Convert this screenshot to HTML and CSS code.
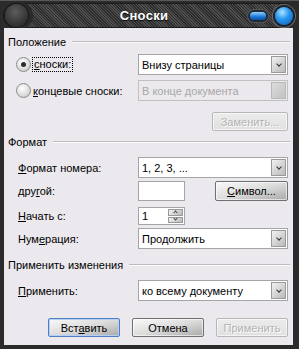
FILE: index.html
```html
<!DOCTYPE html>
<html>
<head>
    <title>Сноски</title>
    <link rel="stylesheet" href="styles.css">
</head>
<body>
    <div class="window">
        <div class="titlebar">
            <div class="track">
                <span class="orb"></span>
                <span class="title">Сноски</span>
                <span class="pill"></span>
                <span class="orb-blue"></span>
            </div>
        </div>

        <div class="client">
            <div class="group-title g1"><span>Положение</span></div>

            <div class="row r1">
                <div class="label radio-label">
                    <span class="radio checked"></span>
                    <span class="focus"><u>с</u>носки:</span>
                </div>
                <div class="select"><span class="value">Внизу страницы</span><span class="drop"></span></div>
            </div>

            <div class="row r2">
                <div class="label radio-label">
                    <span class="radio"></span>
                    <span><u>к</u>онцевые сноски:</span>
                </div>
                <div class="select disabled"><span class="value">В конце документа</span><span class="drop"></span></div>
            </div>

            <div class="row r3">
                <button class="btn disabled replace">Заменить...</button>
            </div>

            <div class="group-title g2"><span>Формат</span></div>

            <div class="row r4">
                <div class="label"><u>Ф</u>ормат номера:</div>
                <div class="select"><span class="value">1, 2, 3, ...</span><span class="drop"></span></div>
            </div>

            <div class="row r5">
                <div class="label">дру<u>г</u>ой:</div>
                <div class="input short"></div>
                <button class="btn symbol"><u>С</u>имвол...</button>
            </div>

            <div class="row r6">
                <div class="label"><u>Н</u>ачать с:</div>
                <div class="input short spin">
                    <span class="value">1</span>
                    <span class="spin-buttons">
                        <span class="spin-up"></span>
                        <span class="spin-down"></span>
                    </span>
                </div>
            </div>

            <div class="row r7">
                <div class="label">Нум<u>е</u>рация:</div>
                <div class="select"><span class="value">Продолжить</span><span class="drop"></span></div>
            </div>

            <div class="group-title g3"><span>Применить изменения</span></div>

            <div class="row r8">
                <div class="label"><u>П</u>рименить:</div>
                <div class="select"><span class="value">ко всему документу</span><span class="drop"></span></div>
            </div>

            <div class="actions">
                <button class="btn default">Вст<u>а</u>вить</button>
                <button class="btn">Отмена</button>
                <button class="btn disabled">Применить</button>
            </div>
        </div>
    </div>
</body>
</html>
```

FILE: styles.css
```css
body {
    margin: 0;
    background: #2a2a2a;
    font-family: "Liberation Sans", Arial, sans-serif;
    font-size: 11px;
    color: #000;
}

.window {
    width: 299px;
    height: 349px;
    background: #2b2b2b;
    display: flex;
    flex-direction: column;
    box-sizing: border-box;
    border-top: 1px solid #5a5a5a;
}

.titlebar {
    height: 27px;
    padding: 2px 3px 0 3px;
    box-sizing: border-box;
}

.track {
    height: 23px;
    border-radius: 12px;
    border: 1px solid #1a1a1a;
    background: repeating-linear-gradient(45deg, #2c2c2c 0 1px, #4f4f4f 1px 2px);
    display: flex;
    align-items: center;
}

.orb {
    width: 23px;
    height: 23px;
    border-radius: 50%;
    margin-left: 1px;
    background: radial-gradient(circle at 45% 35%, #5c5c5c 0, #3a3a3a 55%, #1c1c1c 100%);
    box-shadow: 0 0 0 1px #161616, 3px 0 0 2px #2a2a2a;
}

.title {
    flex: 1;
    text-align: center;
    color: #fff;
    font-weight: bold;
    font-size: 13px;
    letter-spacing: 0.3px;
    text-shadow: 0 1px 1px #000;
    padding-left: 10px;
}

.pill {
    width: 16px;
    height: 8px;
    border-radius: 5px;
    background: linear-gradient(#8fd2ff, #1b78d6 60%, #0b4fa0);
    box-shadow: 0 0 0 2px #1e2a36, 0 0 0 3px #555;
    margin-right: 9px;
}

.orb-blue {
    width: 18px;
    height: 18px;
    border-radius: 50%;
    background: radial-gradient(circle at 40% 30%, #aee4ff 0, #2b9af0 40%, #0a56b8 100%);
    box-shadow: 0 0 0 2px #1a232c, 0 0 0 3px #6a6a6a;
    margin-right: 2px;
}

.client {
    flex: 1;
    background: #ece9ee;
    margin: 0 6px 4px 4px;
    padding: 0 3px 0 4px;
}

.group-title {
    display: flex;
    align-items: center;
    height: 14px;
    gap: 6px;
}

.group-title::after {
    content: "";
    flex: 1;
    height: 1px;
    background: #bdbac0;
    border-bottom: 1px solid #fbfbfb;
}

.g1 { margin-top: 7px; }
.g2 { margin-top: 4px; }
.g3 { margin-top: 9px; }

.row {
    display: flex;
    align-items: center;
    height: 21px;
    padding-left: 10px;
}

.r1 { margin-top: 5px; }
.r2 { margin-top: 5px; }
.r3 { margin-top: 11px; height: 19px; justify-content: flex-end; padding-right: 2px; }
.r4 { margin-top: 8px; }
.r5 { margin-top: 3px; height: 20px; }
.r6 { margin-top: 6px; height: 18px; }
.r7 { margin-top: 3px; }
.r8 { margin-top: 8px; }

.label {
    width: 120px;
    flex: none;
}

.radio-label {
    display: flex;
    align-items: center;
    gap: 2px;
    margin-left: -2px;
    width: 122px;
}

.radio {
    width: 13px;
    height: 13px;
    border-radius: 50%;
    border: 1px solid #8d8d8d;
    background: radial-gradient(circle at 40% 35%, #ffffff 0, #dcdcdc 60%, #b4b4b4 100%);
    display: flex;
    align-items: center;
    justify-content: center;
}

.radio.checked::after {
    content: "";
    width: 5px;
    height: 5px;
    border-radius: 50%;
    background: #2e2e2e;
}

.focus {
    outline: 1px dotted #000;
    padding: 0 1px;
    line-height: 13px;
}

.select {
    width: 150px;
    height: 100%;
    box-sizing: border-box;
    border: 1px solid #a5a5a5;
    background: #fff;
    display: flex;
    align-items: center;
    padding: 1px;
}

.value {
    flex: 1;
    padding-left: 2px;
}

.drop {
    width: 15px;
    height: 100%;
    box-sizing: border-box;
    border: 1px solid #9a9a9a;
    background: linear-gradient(135deg, #f2f2f2, #b9b9b9);
    display: flex;
    align-items: center;
    justify-content: center;
}

.drop::after {
    content: "";
    width: 3px;
    height: 3px;
    border-right: 1px solid #333;
    border-bottom: 1px solid #333;
    transform: rotate(45deg);
    margin-top: -2px;
}

.select.disabled {
    background: #ece9ee;
    border-color: #c0c0c0;
    color: #a7a7a7;
}

.select.disabled .drop {
    border-color: #b8b8b8;
    background: linear-gradient(135deg, #dcdcdc, #c2c2c2);
}

.select.disabled .drop::after {
    display: none;
}

.input {
    height: 100%;
    box-sizing: border-box;
    border: 1px solid #a5a5a5;
    background: #fff;
}

.short {
    width: 47px;
}

.spin {
    display: flex;
    align-items: center;
    padding: 1px;
}

.spin-buttons {
    width: 15px;
    height: 100%;
    display: flex;
    flex-direction: column;
    gap: 1px;
}

.spin-up,
.spin-down {
    flex: 1;
    border: 1px solid #9a9a9a;
    background: linear-gradient(135deg, #f2f2f2, #b9b9b9);
    display: flex;
    align-items: center;
    justify-content: center;
}

.spin-up::after,
.spin-down::after {
    content: "";
    width: 2px;
    height: 2px;
    border-left: 1px solid #444;
    border-top: 1px solid #444;
    transform: rotate(45deg);
    margin-top: 1px;
}

.spin-down::after {
    transform: rotate(225deg);
    margin-top: -2px;
}

.btn {
    width: 73px;
    height: 19px;
    padding: 0;
    font-family: inherit;
    font-size: 11px;
    color: #000;
    border: 1px solid #6f6f6f;
    border-radius: 2px;
    background: linear-gradient(to bottom right, #fafafa 0%, #dcdcdc 50%, #a9a9a9 100%);
    box-shadow: inset 0 0 0 1px rgba(255, 255, 255, 0.6);
}

.btn.symbol {
    margin-left: auto;
    margin-right: 2px;
    height: 20px;
}

.btn.disabled {
    color: #b2b2b2;
    text-shadow: 1px 1px 0 #fff;
    border-color: #b7b7b7;
    background: linear-gradient(#ececec, #e0e0e0);
}

.btn.replace {
    width: 76px;
}

.btn.default {
    border-color: #4f7ec2;
    box-shadow: inset 0 0 0 1px #b7cff0;
}

.actions {
    display: flex;
    justify-content: flex-end;
    gap: 12px;
    margin-top: 17px;
    padding-right: 2px;
}

.actions .btn {
    width: 72px;
}
```
